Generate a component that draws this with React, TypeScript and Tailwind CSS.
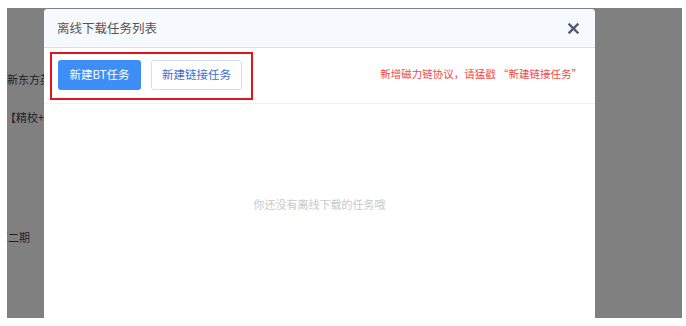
const font = { fontFamily: '"Microsoft YaHei", "Noto Sans CJK SC", sans-serif' };

export default function App() {
  return (
    <div className="w-[686px] h-[326px] bg-white pl-[7px] pt-[8px] pr-[4px] pb-[8px]" style={font}>
      <div className="relative h-full bg-[#808080] overflow-hidden">
        {/* page behind the overlay */}
        <div className="flex flex-col text-[11px] text-[#1f1f1f] leading-none">
          <span className="mt-[66px] whitespace-nowrap">新东方英语</span>
          <span className="mt-[27px] -ml-[2px] whitespace-nowrap">【精校+订】</span>
          <span className="mt-[109px] -ml-[10px] whitespace-nowrap">第二期</span>
        </div>

        {/* dialog */}
        <div className="absolute left-[37px] top-[1px] w-[551px] bottom-0 bg-white rounded-t-[4px] flex flex-col">
          <div className="h-[39px] shrink-0 flex items-center justify-between pl-[13px] pr-[16px] bg-[#f6f9fe] border-b border-[#d6dff0] rounded-t-[4px]">
            <span className="text-[12.5px] text-[#555]">离线下载任务列表</span>
            <svg width="11" height="11" viewBox="0 0 11 11" className="mt-[1px]">
              <path d="M1.5 1.5 L9.5 9.5 M9.5 1.5 L1.5 9.5" stroke="#4f5a6e" strokeWidth="2.4" strokeLinecap="square" />
            </svg>
          </div>

          <div className="h-[56px] shrink-0 flex items-start justify-between pl-[6px] pr-[13px] pt-[4px] border-b border-[#eef1f5]">
            <div className="flex gap-[10px] border-2 border-[#e3141c] pl-[6px] pr-[9px] pt-[6px] pb-[8px]">
              <button className="h-[30px] w-[83px] rounded-[3px] bg-[#3e8ef7] text-white text-[11.5px]">新建BT任务</button>
              <button className="h-[30px] w-[91px] rounded-[3px] bg-white border border-[#d3ddf0] text-[#3c6fd6] text-[11.5px]">新建链接任务</button>
            </div>
            <span className="mt-[14px] text-[10.5px] text-[#f0474b] whitespace-nowrap">新增磁力链协议，请猛戳 “新建链接任务”</span>
          </div>

          <div className="flex-1 flex justify-center pt-[92px]">
            <span className="text-[11px] text-[#c9c9c9]">你还没有离线下载的任务哦</span>
          </div>
        </div>
      </div>
    </div>
  );
}
